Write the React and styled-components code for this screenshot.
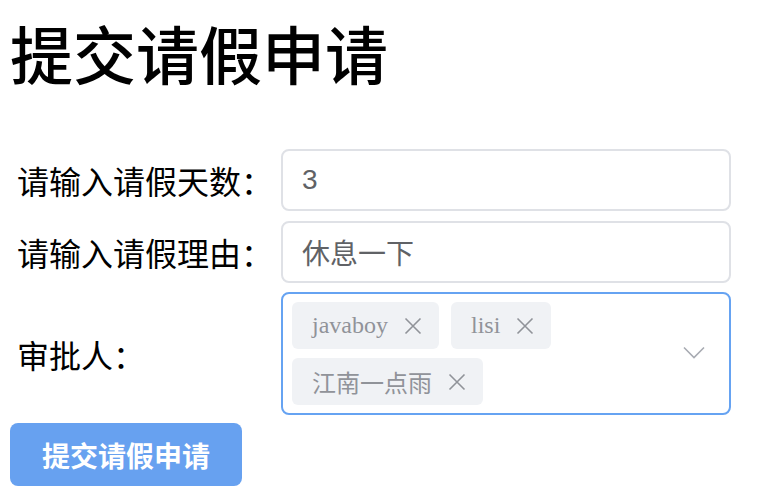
import styled, { createGlobalStyle } from 'styled-components';

const GlobalStyle = createGlobalStyle`
  body {
    margin: 0;
    background: #ffffff;
    font-family: "Liberation Serif", "Noto Sans CJK SC", serif;
  }
`

const approvers = ['javaboy', 'lisi', '江南一点雨'];

function CloseIcon() {
  return (
    <svg width="24" height="24" viewBox="0 0 24 24">
      <path d="M4.5 4.5 L19.5 19.5 M19.5 4.5 L4.5 19.5" stroke="#909399" strokeWidth="1.6" fill="none" />
    </svg>
  );
}

function ChevronIcon() {
  return (
    <svg width="22" height="13" viewBox="0 0 22 13">
      <path d="M1 1.5 L11 11.5 L21 1.5" stroke="#a8abb2" strokeWidth="1.6" fill="none" />
    </svg>
  );
}

function App() {
  return (
    <Page>
      <GlobalStyle />
      <Title>提交请假申请</Title>
      <Form>
        <Label>请输入请假天数：</Label>
        <Input>3</Input>
        <Label>请输入请假理由：</Label>
        <Input>休息一下</Input>
        <Label>审批人：</Label>
        <Select>
          <Tags>
            {approvers.map((name) => (
              <Tag key={name}>
                {name}
                <TagClose>
                  <CloseIcon />
                </TagClose>
              </Tag>
            ))}
          </Tags>
          <Arrow>
            <ChevronIcon />
          </Arrow>
        </Select>
      </Form>
      <SubmitButton>提交请假申请</SubmitButton>
    </Page>
  );
}

const Page = styled.div`
  padding: 0 0 0 10px;
`

const Title = styled.h1`
  margin: 26px 0 0 0;
  font-size: 63px;
  line-height: 64px;
  font-weight: 500;
  color: #000;
`

const Form = styled.div`
  display: grid;
  grid-template-columns: 271px 450px;
  row-gap: 10px;
  align-items: center;
  margin-top: 59px;
`

const Label = styled.div`
  padding-left: 7px;
  font-size: 32px;
  color: #000;
`

const Input = styled.div`
  box-sizing: border-box;
  height: 62px;
  border: 2px solid #dfe1e6;
  border-radius: 8px;
  padding: 0 19px;
  display: flex;
  align-items: center;
  font-family: "Liberation Sans", "Noto Sans CJK SC", sans-serif;
  font-size: 28px;
  color: #606266;
`

const Select = styled.div`
  box-sizing: border-box;
  height: 123px;
  margin-top: -1px;
  border: 2px solid #66a3f2;
  border-radius: 8px;
  padding: 8px 24px 8px 9px;
  display: flex;
  align-items: center;
`

const Tags = styled.div`
  flex: 1;
  display: flex;
  flex-wrap: wrap;
  gap: 9px 12px;
  padding-right: 80px;
`

const Tag = styled.span`
  height: 47px;
  padding: 0 14px 0 20px;
  display: inline-flex;
  align-items: center;
  background: #f0f2f5;
  border-radius: 6px;
  font-size: 24px;
  color: #909399;
`

const TagClose = styled.span`
  display: flex;
  margin-left: 13px;
`

const Arrow = styled.span`
  display: flex;
  margin-top: -2px;
`

const SubmitButton = styled.button`
  margin-top: 8px;
  width: 232px;
  height: 63px;
  border: none;
  border-radius: 8px;
  background: #67a1f0;
  color: #fff;
  font-family: "Liberation Sans", "Noto Sans CJK SC", sans-serif;
  font-size: 28px;
  font-weight: 700;
  padding: 0;
`

export default App;
